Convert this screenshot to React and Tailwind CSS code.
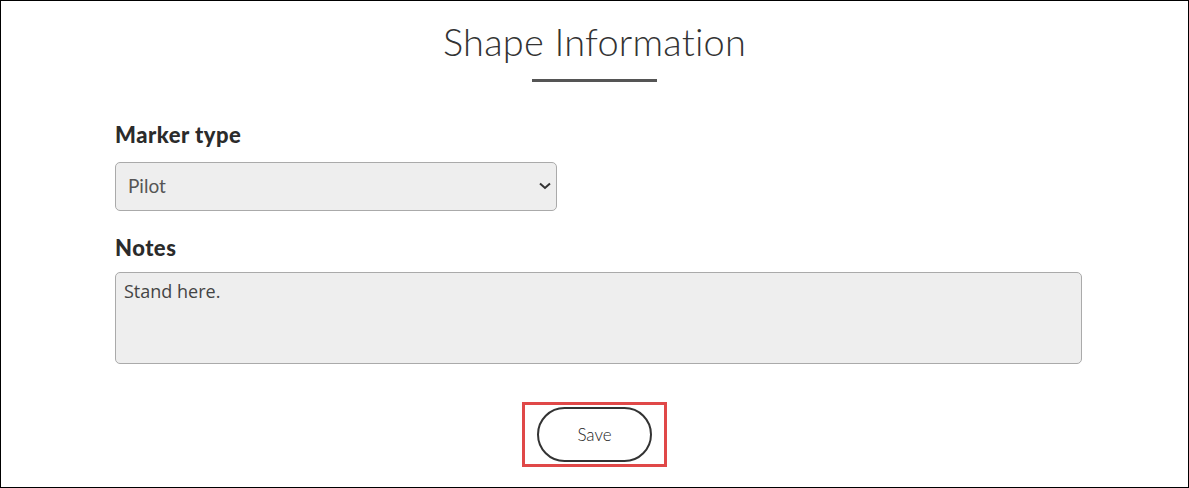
import React from 'react';

const App = () => {
  return (
    <div className="w-[1189px] h-[488px] bg-white border border-black font-['Lato',sans-serif] text-[#333]">
      <div className="flex flex-col items-center pt-[16px]">
        <h1 className="text-[38px] font-light leading-[48px] text-[#333] tracking-[0.2px]">Shape Information</h1>
        <div className="w-[125px] h-[3px] bg-[#555] mt-[14px]" />
      </div>

      <form className="pl-[114px] w-[1081px] mt-[40px]" onSubmit={(e) => e.preventDefault()}>
        <label className="block text-[22px] font-black leading-[26px] text-[#2b2b2b] tracking-[0.5px]">Marker type</label>
        <div className="relative w-[442px] mt-[14px]">
          <select
            defaultValue="Pilot"
            className="w-full h-[49px] appearance-none bg-[#eeeeee] border border-[#aaaaaa] rounded-[5px] pl-[12px] text-[19px] text-[#555] outline-none"
          >
            <option>Pilot</option>
            <option>Landing</option>
          </select>
          <svg className="absolute right-[6px] top-[20px] pointer-events-none" width="12" height="8" viewBox="0 0 12 8">
            <path d="M1 1.5l5 4.5 5-4.5" fill="none" stroke="#333" strokeWidth="2" />
          </svg>
        </div>

        <label className="block text-[22px] font-black leading-[26px] text-[#2b2b2b] tracking-[0.5px] mt-[24px]">Notes</label>
        <textarea
          defaultValue="Stand here."
          className="block w-[967px] h-[92px] mt-[11px] bg-[#eeeeee] border border-[#aaaaaa] rounded-[5px] px-[8px] py-[5px] font-['Open_Sans',sans-serif] text-[18px] text-[#444] resize-none outline-none"
        />

        <div className="flex justify-center mt-[38px] -ml-[8px]">
          <div className="border-[3px] border-[#e04848] px-[12px] py-[2px]">
            <button type="submit" className="w-[115px] h-[55px] rounded-full border-2 border-[#333] bg-white text-[17px] font-light text-[#222]">
              Save
            </button>
          </div>
        </div>
      </form>
    </div>
  );
};

export default App;
